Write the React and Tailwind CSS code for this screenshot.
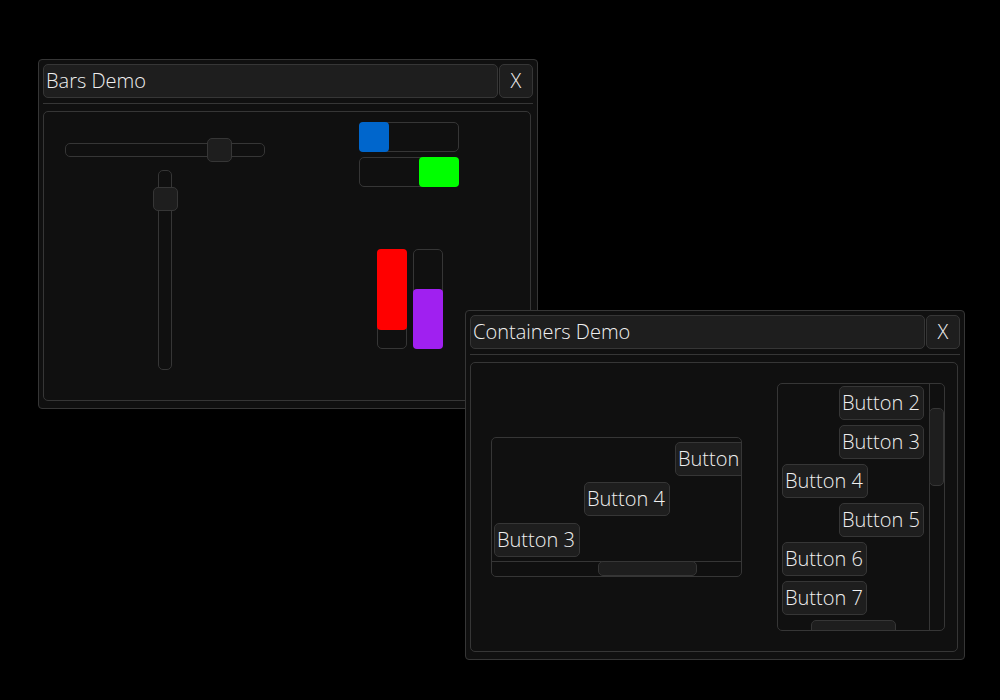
import React from "react";

const font = { fontFamily: '"Open Sans", "Noto Sans", sans-serif' };

function Btn({ label, w, ml = 0, mt = 0, cls = "" }) {
  return (
    <div
      className={`shrink-0 h-[34px] bg-[#1e1e1e] border border-[#363636] rounded-[5px] flex items-center pl-[2px] text-[20px] font-light text-[#f0f0f0] whitespace-nowrap overflow-hidden ${cls}`}
      style={{ width: w, marginLeft: ml, marginTop: mt }}
    >
      {label}
    </div>
  );
}

function Window({ title, left, top, children }) {
  return (
    <div
      className="absolute w-[500px] h-[350px] bg-[#101010] border border-[#363636] rounded-[4px] p-[4px] flex flex-col"
      style={{ left, top }}
    >
      <div className="flex gap-[1px] h-[34px]">
        <div className="flex-1 bg-[#1e1e1e] border border-[#363636] rounded-[5px] flex items-center pl-[2px] text-[20px] font-light text-[#f0f0f0]">
          {title}
        </div>
        <div className="w-[34px] bg-[#1e1e1e] border border-[#363636] rounded-[5px] flex items-center justify-center text-[20px] font-light text-[#f0f0f0]">
          X
        </div>
      </div>
      <div className="mt-[5px] h-px bg-[#363636]" />
      <div className="mt-[7px] mr-[2px] h-[290px] border border-[#363636] rounded-[5px] relative overflow-hidden">
        {children}
      </div>
    </div>
  );
}

function BarsContent() {
  return (
    <div className="flex items-start pt-[10px]">
      <div className="ml-[21px] mt-[16px] w-[200px] flex flex-col">
        <div className="relative h-[24px]">
          <div className="mt-[5px] h-[14px] border border-[#363636] rounded-[5px]" />
          <div className="absolute left-[142px] top-0 w-[25px] h-[24px] bg-[#1e1e1e] border border-[#363636] rounded-[5px]" />
        </div>
        <div className="relative mt-[8px] h-[200px]">
          <div className="ml-[93px] w-[14px] h-[200px] border border-[#363636] rounded-[5px]" />
          <div className="absolute left-[88px] top-[17px] w-[25px] h-[24px] bg-[#1e1e1e] border border-[#363636] rounded-[5px]" />
        </div>
      </div>
      <div className="ml-[94px] w-[100px] flex flex-col">
        <div className="relative h-[30px] border border-[#363636] rounded-[5px]">
          <div className="absolute -left-px -top-px -bottom-px w-[30px] bg-[#0066cc] rounded-[4px]" />
        </div>
        <div className="relative mt-[5px] h-[30px] border border-[#363636] rounded-[5px]">
          <div className="absolute -right-px -top-px -bottom-px w-[40px] bg-[#00ff00] rounded-[4px]" />
        </div>
        <div className="mt-[62px] ml-[18px] flex gap-[6px]">
          <div className="relative w-[30px] h-[100px] border border-[#363636] rounded-[5px]">
            <div className="absolute -left-px -right-px -top-px h-[81px] bg-[#ff0000] rounded-[4px]" />
          </div>
          <div className="relative w-[30px] h-[100px] border border-[#363636] rounded-[5px]">
            <div className="absolute -left-px -right-px -bottom-px h-[60px] bg-[#a020f0] rounded-[4px]" />
          </div>
        </div>
      </div>
    </div>
  );
}

function ContainersContent() {
  return (
    <div className="flex items-start pt-[20px]">
      <div className="ml-[20px] mt-[54px] w-[251px] h-[140px] border border-[#363636] rounded-[5px] relative overflow-hidden flex flex-col">
        <div className="flex-1 flex flex-col pt-[4px]">
          <Btn label="Button 5" w={86} ml={183} />
          <Btn label="Button 4" w={86} ml={92} mt={6} />
          <Btn label="Button 3" w={86} ml={2} mt={7} />
        </div>
        <div className="relative h-[15px] border-t border-[#363636]">
          <div className="absolute left-[106px] -top-px bottom-0 w-[99px] bg-[#1e1e1e] border border-[#363636] rounded-[5px]" />
        </div>
      </div>
      <div className="ml-[35px] w-[168px] h-[248px] border border-[#363636] rounded-[5px] relative overflow-hidden flex">
        <div className="flex-1 flex flex-col pt-[2px] overflow-hidden">
          <Btn label="Button 2" w={85} ml={61} />
          <Btn label="Button 3" w={85} ml={61} mt={5} />
          <Btn label="Button 4" w={86} ml={4} mt={5} />
          <Btn label="Button 5" w={85} ml={61} mt={5} />
          <Btn label="Button 6" w={85} ml={4} mt={5} />
          <Btn label="Button 7" w={85} ml={4} mt={5} />
          <Btn label="" w={85} ml={33} mt={5} />
        </div>
        <div className="relative w-[15px] border-l border-[#363636] shrink-0">
          <div className="absolute -left-px right-0 top-[24px] h-[78px] bg-[#1e1e1e] border border-[#363636] rounded-[5px]" />
        </div>
      </div>
    </div>
  );
}

export default function App() {
  return (
    <div className="relative w-[1000px] h-[700px] bg-black overflow-hidden" style={font}>
      <Window title="Bars Demo" left={38} top={59}>
        <BarsContent />
      </Window>
      <Window title="Containers Demo" left={465} top={310}>
        <ContainersContent />
      </Window>
    </div>
  );
}
